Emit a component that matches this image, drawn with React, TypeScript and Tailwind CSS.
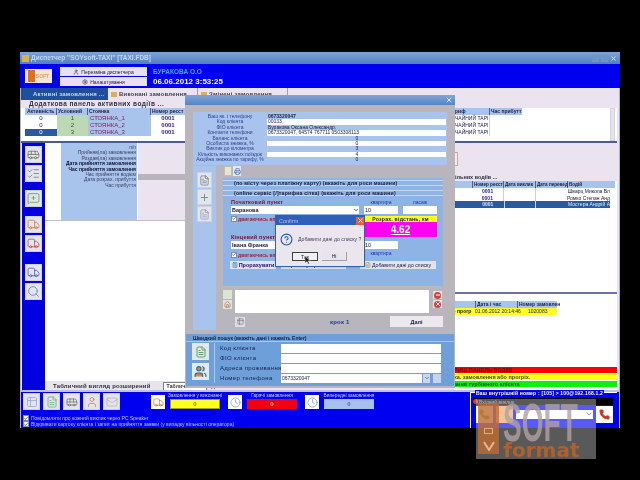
import React from "react";
import { Bus, Truck, Clock, Users, HelpCircle, Phone, Calculator, FileText, ListChecks, MessageSquarePlus, Plus, Search, ChevronDown, X, Check, Home, Minus, Settings, Printer, User, Table2, Mail } from "lucide-react";

function IconBtn({ children, w = "w-[17px]", h = "h-[17px]" }: { children: React.ReactNode; w?: string; h?: string }) {
  return <div className={`${w} ${h} bg-[#e4e4f0] border border-[#d0d0e0] flex items-center justify-center shrink-0`}>{children}</div>;
}
function Check2() {
  return <span className="w-[6px] h-[6px] bg-white border border-[#8888a0] flex items-center justify-center shrink-0"><Check size={5} strokeWidth={4} className="text-[#202040]" /></span>;
}
const leftRows = [["0", "1", "СТОЯНКА_1"], ["0", "2", "СТОЯНКА_2"], ["0", "3", "СТОЯНКА_3"]];
const midLabels = ["п/п", "Прийняв(ла) замовлення", "Роздав(ла) замовлення", "Дата прийняття замовлення", "Час прийняття замовлення", "Час прийняття водієм", "Дата розрах. прибуття", "Час прибуття"];
const infoRows: [string, string, boolean, string][] = [
  ["Ваш як. і телефону", "0673320047", false, "font-bold"],
  ["Код клієнта", "00033", true, "text-[#302080]"],
  ["ФІО клієнта", "Буракова Оксана Олександр.", false, ""],
  ["Контакти телефони", "0673320047, 64574   767711  0503308113", true, ""],
  ["Баланс клієнта", "0", false, "text-center"],
  ["Особиста знижка, %", "0", true, "text-center"],
  ["Виклик до кілометра", "3", false, "text-center"],
  ["Кількість виконаних поїздок", "4", true, "text-center"],
  ["Акційна знижка по тарифу, %", "0", false, "text-center"],
];

export default function App() {
  return (
    <div className="relative w-[640px] h-[480px] bg-black overflow-hidden font-['Liberation_Sans',sans-serif] text-[6px] leading-[6px] text-[#202040] blur-[0.4px]">
      {/* Main window */}
      <div className="absolute left-[20px] top-[52px] w-[600px] h-[376px] flex flex-col">
        <div className="h-[12px] bg-gradient-to-b from-[#7fa4d6] to-[#4f80c4] flex items-center px-[2px] gap-[2px] shrink-0">
          <span className="w-[7px] h-[7px] bg-[#e0b040] shrink-0" />
          <span className="text-[#c4d4ec] text-[6.5px] font-bold">Диспетчер "SOYsoft-TAXI" [TAXI.FDB]</span>
          <div className="ml-auto flex gap-[2px] pr-[1px]">
            <span className="w-[7px] h-[7px] bg-[#6f94c8]" />
            <span className="w-[7px] h-[7px] bg-[#6f94c8]" />
            <X size={7} strokeWidth={3} className="text-[#d8e8f8]" />
          </div>
        </div>
        <div className="h-[24px] bg-[#0000f0] flex shrink-0">
          <div className="ml-[5px] mt-[5px] w-[27px] h-[14px] bg-[#f2e4d8] flex items-center justify-center gap-[1px]">
            <span className="w-[7px] h-[12px] bg-[#e07020]" />
            <span className="text-[#e8a060] text-[5px] font-bold">SOFT</span>
          </div>
          <div className="ml-[8px] mt-[3px] flex flex-col gap-[1px] w-[87px]">
            <div className="h-[9px] bg-[#e8e0f0] flex items-center justify-center text-[5px] gap-[2px]"><User size={6} /> Перезміна диспетчера</div>
            <div className="h-[9px] bg-[#e8e0f0] flex items-center justify-center text-[5px] gap-[2px]"><Settings size={6} /> Налаштування</div>
          </div>
          <div className="ml-[6px] mt-[3px] flex flex-col">
            <span className="text-[#40b0f0] text-[6.5px] leading-[9px] font-bold">БУРАКОВА О.О</span>
            <span className="text-white text-[8px] leading-[12px] font-bold">06.06.2012 3:53:25</span>
          </div>
        </div>

        <div className="flex-1 min-h-0 bg-[#ebe4f0] flex flex-col border-x border-[#b0b0c8]">
          {/* tabs */}
          <div className="h-[12px] flex items-stretch shrink-0 text-[6px] font-bold tracking-[0.2px]">
            <div className="w-[87px] bg-[#1f4f9c] text-[#c8d8f0] flex items-center pl-[12px]">Активні замовлення ...</div>
            <div className="w-[90px] flex items-center pl-[3px] gap-[2px] border-r border-[#a0a0b0] text-[#404050]"><span className="w-[6px] h-[5px] bg-[#d8b060]" />Виконані замовлення ...</div>
            <div className="w-[90px] flex items-center pl-[3px] gap-[2px] border-r border-[#a0a0b0] text-[#404050]"><span className="w-[6px] h-[5px] bg-[#d8b060]" />Змінені замовлення</div>
          </div>
          {/* top panel */}
          <div className="h-[43px] mr-[2px] bg-white border-b-2 border-[#4a5a9c] flex flex-col shrink-0">
            <div className="h-[8px] bg-[#ebe4f0] text-[6.5px] font-bold tracking-[0.45px] pl-[8px] pt-[1px] text-[#303040]">Додаткова панель активних водіїв ...</div>
            <div className="flex pl-[4px]">
              <div className="w-[160px]">
                <div className="grid grid-cols-[32px_31px_63px_34px] h-[7px] bg-[#a8c4ec] font-bold text-[5px] leading-[7px]">
                  <span className="pl-[2px] border-r border-[#506090]">Активність</span>
                  <span className="pl-[1px] border-r border-[#506090]">Условний</span>
                  <span className="pl-[1px] border-r border-[#506090]">Стоянка</span>
                  <span className="pl-[1px] whitespace-nowrap">Номер реєст</span>
                </div>
                {leftRows.map((r, i) => (
                  <div key={i} className="grid grid-cols-[32px_31px_63px_34px] h-[7px] leading-[7px] text-[6px]">
                    <span className={`text-center ${i === 2 ? "bg-[#2a5a9c] text-white" : "bg-white"}`}>{r[0]}</span>
                    <span className="text-center bg-[#bcd8b4] text-[#206020]">{r[1]}</span>
                    <span className="pl-[2px] bg-[#a8c4ec] text-[#802050]">{r[2]}</span>
                    <span className="text-center bg-white text-[#302090] font-bold">0001</span>
                  </div>
                ))}
              </div>
              <div className="ml-auto w-[162px] flex">
                <div className="w-[67px]">
                  <div className="flex h-[7px] bg-[#a8c4ec] font-bold text-[5px] leading-[7px]">
                    <span className="w-[35px] pr-[27px] border-r border-[#506090] text-right shrink-0">риф</span>
                    <span className="pl-[1px] whitespace-nowrap">Час прибутт</span>
                  </div>
                  {[0, 1, 2].map((i) => (
                    <div key={i} className="h-[7px] leading-[7px] w-[35px] text-[5px] pr-[1px] border-r border-[#d0d0d8] whitespace-nowrap text-right">ЧАЙНИЙ ТАРІ</div>
                  ))}
                </div>
                <div className="ml-auto mr-[2px] w-[5px] h-[33px] bg-[#e4e4ec] border border-[#d0d0d8]" />
              </div>
            </div>
          </div>
          {/* lower area */}
          <div className="flex-1 min-h-0 flex">
            <div className="w-[23px] bg-[#0000e0] flex flex-col items-center pt-[3px] shrink-0 gap-[2px] ml-[1px]">
              <IconBtn><Bus size={13} strokeWidth={1.5} className="text-[#707058]" /></IconBtn>
              <IconBtn><ListChecks size={13} strokeWidth={1.5} className="text-[#708068]" /></IconBtn>
              <div className="h-[4px]" />
              <IconBtn><MessageSquarePlus size={13} strokeWidth={1.5} className="text-[#60a040]" /></IconBtn>
              <div className="h-[5px]" />
              <IconBtn><Truck size={13} strokeWidth={1.5} className="text-[#d08030]" /></IconBtn>
              <IconBtn><Truck size={13} strokeWidth={1.5} className="text-[#c05040]" /></IconBtn>
              <div className="h-[8px]" />
              <IconBtn><Truck size={13} strokeWidth={1.5} className="text-[#5060c0]" /></IconBtn>
              <IconBtn><Search size={13} strokeWidth={1.5} className="text-[#6080a0]" /></IconBtn>
            </div>
            <div className="w-[140px] shrink-0 flex flex-col bg-white">
              <div className="h-[78px] flex border-b border-[#c0c0c8] shrink-0">
                <div className="w-[16px] bg-white" />
                <div className="w-[76px] bg-[#a8c4ec] pt-[2px] pr-[1px] text-right text-[5px] leading-[5.4px]">
                  {midLabels.map((l, i) => <div key={i} className={i === 3 || i === 4 ? "font-bold whitespace-nowrap text-[#101030]" : "whitespace-nowrap text-[#404060]"}>{l}</div>)}
                </div>
                <div className="flex-1 bg-[#ebe4f0] pt-[31px] ml-[1px]"><div className="h-[6px] bg-[#b8b4bc]" /></div>
              </div>
              <div className="flex-1" />
              <div className="h-[9px] bg-[#e8e4ec] flex items-end text-[6px] font-bold tracking-[0.15px] shrink-0 text-[#303040]">
                <span className="ml-[8px] mb-[1px] whitespace-nowrap">Табличний вигляд розширений</span>
                <span className="ml-[12px] pl-[3px] bg-white border border-[#808090] border-b-0 h-[8px] w-[44px] whitespace-nowrap text-[5px] leading-[7px]">Табличний вигляд</span>
              </div>
            </div>
            <div className="flex-1 min-w-0" />
            <div className="w-[163px] shrink-0 flex flex-col mr-[2px]">
              <div className="h-[31px] flex items-center shrink-0">
                <span className="ml-[-4px] w-[8px] h-[14px] bg-[#f4ecf0] border border-[#d8a0a0] flex items-center text-[#c02020] text-[7px] font-bold justify-center">)</span>
              </div>
              <div className="h-[7px] text-[5.5px] font-bold pl-[1px] shrink-0 whitespace-nowrap text-[#303040]">ільних водіїв ...</div>
              <div className="h-[113px] bg-white border-b-2 border-[#7070b0] shrink-0">
                <div className="flex h-[7px] bg-[#a8c4ec] text-[4.6px] leading-[7px] font-bold mr-[2px]">
                  <span className="w-[18px]" />
                  <span className="w-[32px] border-x border-[#506090] pl-[1px] whitespace-nowrap">Номер реєст</span>
                  <span className="w-[32px] border-r border-[#506090] pl-[1px] whitespace-nowrap">Дата виклик</span>
                  <span className="w-[32px] border-r border-[#506090] pl-[1px] whitespace-nowrap">Дата перевед</span>
                  <span className="pl-[1px]">Водій</span>
                </div>
                {["Шварц Микола Вл", "Ромко Степан Анд", "Мостера Андрій А"].map((n, i) => (
                  <div key={i} className={`flex h-[6.6px] leading-[6.6px] text-[5px] mr-[7px] ${i === 2 ? "bg-[#2a5a9c] text-[#dce8f8]" : ""}`}>
                    <span className="w-[18px]" />
                    <span className={`w-[32px] text-center font-bold ${i === 2 ? "" : "text-[#302090]"}`}>0001</span>
                    <span className="w-[32px] border-l border-[#d0d0d8]" />
                    <span className="w-[32px] border-l border-[#d0d0d8]" />
                    <span className="pl-[1px] whitespace-nowrap flex-1">{n}</span>
                  </div>
                ))}
              </div>
              <div className="flex-1 bg-white flex flex-col pt-[7px]">
                <div className="flex h-[7px] bg-[#a8c4ec] w-[103px] text-[5px] leading-[7px] font-bold">
                  <span className="w-[21px]" />
                  <span className="w-[42px] border-l border-[#506090] pl-[1px]">Дата і час</span>
                  <span className="w-[40px] border-l border-[#506090] pl-[1px] whitespace-nowrap">Номер замовлен</span>
                </div>
                <div className="flex h-[7px] leading-[7px] bg-[#ffff20] w-[103px] text-[5px] whitespace-nowrap">
                  <span className="w-[21px] font-bold">- прогр</span>
                  <span className="w-[42px]">01.06.2012 20:14:46</span>
                  <span className="pl-[11px]">1020083</span>
                </div>
                <div className="flex-1" />
                <div className="h-[6px] leading-[6px] bg-[#ff0000] text-[5.5px] font-bold text-[#601010]">РИШ ПАНЕЛЬ ВОДІЇВ</div>
                <div className="h-[1px]" />
                <div className="h-[6px] leading-[6px] bg-[#ffff10] text-[5.5px] font-bold text-[#405010]">ка. замовлення або прогріх.</div>
                <div className="h-[1px]" />
                <div className="h-[6px] leading-[6px] bg-[#10f010] text-[5.5px] font-bold text-[#105010]">ання турбівного клієнта</div>
                <div className="h-[3px]" />
              </div>
            </div>
          </div>
          {/* bottom blue bar */}
          <div className="h-[38px] bg-[#0000f0] border-t-2 border-[#c0c0e0] flex shrink-0">
            <div className="w-[440px] pl-[2px] pt-[1px] flex flex-col">
              <div className="flex items-start">
                <div className="flex gap-[3px]">
                  <IconBtn><Table2 size={12} strokeWidth={1.5} className="text-[#90a8d0]" /></IconBtn>
                  <IconBtn><FileText size={12} strokeWidth={1.5} className="text-[#60a870]" /></IconBtn>
                  <IconBtn><Bus size={12} strokeWidth={1.5} className="text-[#707058]" /></IconBtn>
                  <IconBtn><User size={12} strokeWidth={1.5} className="text-[#c08040]" /></IconBtn>
                  <IconBtn><Mail size={12} strokeWidth={1.5} className="text-[#b0b0b0]" /></IconBtn>
                </div>
                <div className="ml-[31px] mt-[2px] w-[14px] h-[14px] bg-white flex items-center justify-center"><Truck size={11} strokeWidth={1.5} className="text-[#c08030]" /></div>
                <div className="ml-[5px] w-[50px] flex flex-col items-center">
                  <span className="text-[#c8d4ff] text-[4.8px] leading-[6px] whitespace-nowrap">Замовлення у виконанні</span>
                  <span className="w-[50px] h-[10px] bg-[#ffff20] border border-[#a0a020] text-center text-[#a08010] text-[6px] leading-[9px] font-bold">0</span>
                </div>
                <div className="ml-[8px] mt-[2px] w-[14px] h-[14px] bg-white flex items-center justify-center"><Clock size={11} strokeWidth={1.5} className="text-[#8090b0]" /></div>
                <div className="ml-[5px] w-[50px] flex flex-col items-center">
                  <span className="text-[#c8d4ff] text-[4.8px] leading-[6px] whitespace-nowrap">Гарячі замовлення</span>
                  <span className="w-[50px] h-[10px] bg-[#f00010] text-center text-[#f0c0c0] text-[6px] leading-[10px] font-bold">0</span>
                </div>
                <div className="ml-[8px] mt-[2px] w-[14px] h-[14px] bg-white flex items-center justify-center"><Clock size={11} strokeWidth={1.5} className="text-[#6090c0]" /></div>
                <div className="ml-[5px] w-[50px] flex flex-col items-center">
                  <span className="text-[#c8d4ff] text-[4.8px] leading-[6px] whitespace-nowrap">Випередні замовлення</span>
                  <span className="w-[50px] h-[10px] bg-[#a8c0f0] text-center text-[#5070a0] text-[6px] leading-[10px] font-bold">0</span>
                </div>
              </div>
              <div className="mt-[5px] flex items-center gap-[2px] text-[#b8c8ff] text-[5px] leading-[6px] whitespace-nowrap"><Check2 /> Повідомляти про кожний виклик через PC Speaker</div>
              <div className="flex items-center gap-[2px] text-[#b8c8ff] text-[5px] leading-[6px] whitespace-nowrap"><Check2 /> Відкривати картоку клієнта і запит на прийняття заявки (у випадку вільності оператора)</div>
            </div>
            <div className="ml-[9px] w-[147px] h-[36px] border-l border-t border-white relative flex flex-col">
              <span className="absolute -top-[3px] left-[4px] bg-[#0000f0] px-[1px] text-white text-[5px] leading-[6px] font-bold whitespace-nowrap tracking-[0.2px]">Ваш внутрішній номер : [105] &gt; 100@192.168.1.2</span>
              <div className="mt-[5px] ml-[2px] h-[7px] w-[140px] bg-black flex items-center gap-[1px] text-[5px] text-[#8090c0]"><span className="w-[5px] h-[5px] rounded-full bg-[#e03030]" /> Вхідний виклик</div>
              <div className="ml-[5px] mt-[1px] flex items-start">
                <div className="w-[17px] h-[17px] bg-white flex items-center justify-center"><Phone size={11} className="text-[#508020]" fill="#508020" /></div>
                <div className="ml-[3px] w-[17px] h-[17px] bg-[#f0a060]" />
                <div className="ml-[3px] mt-[4px] w-[77px] h-[9px] bg-white flex justify-end"><ChevronDown size={8} /></div>
                <div className="ml-[3px] w-[17px] h-[17px] bg-white flex items-center justify-center"><Phone size={11} className="text-[#d03020]" fill="#d03020" /></div>
              </div>
            </div>
          </div>
        </div>
      </div>

      {/* Order dialog */}
      <div className="absolute left-[185px] top-[95px] w-[270px] h-[293px] bg-[#b8b5bd] flex flex-col">
        <div className="h-[10px] bg-gradient-to-b from-[#7fa4d6] to-[#5585c6] flex justify-end items-center pr-[2px] shrink-0"><X size={8} strokeWidth={3} className="text-[#d8e8f8]" /></div>
        <div className="mt-[7px] ml-[8px] w-[254px] h-[53px] bg-[#a8c4ec] shrink-0 py-[2px] text-[5px] leading-[5.3px]">
          {infoRows.map((r, i) => (
            <div key={i} className="flex h-[5.4px]">
              <span className="w-[74px] text-center text-[#304090] whitespace-nowrap">{r[0]}</span>
              <span className={`flex-1 pl-[1px] mr-[1px] whitespace-nowrap ${r[2] ? "bg-white" : ""} ${r[3]}`}>{r[1]}</span>
            </div>
          ))}
        </div>
        <div className="flex ml-[8px] mt-[1px] h-[164px] shrink-0">
          <div className="w-[23px] bg-[#a8c4ec] flex flex-col items-center pt-[6px] gap-[1px] shrink-0">
            <IconBtn h="h-[16px]" w="w-[15px]"><FileText size={11} strokeWidth={1.5} className="text-[#607070]" /></IconBtn>
            <IconBtn h="h-[16px]" w="w-[15px]"><Plus size={11} className="text-[#60a040]" /></IconBtn>
            <IconBtn h="h-[16px]" w="w-[15px]"><FileText size={11} strokeWidth={1.5} className="text-[#8090a0]" /></IconBtn>
          </div>
          <div className="ml-[7px] w-[220px] flex flex-col">
            <div className="flex gap-[1px] pl-[1px] h-[12px] shrink-0">
              <span className="w-[8px] h-[10px] bg-[#e8e4d0] border border-[#c0c0b0]" />
              <span className="w-[8px] h-[10px] bg-[#e0e8f4] flex items-center justify-center"><Printer size={7} className="text-[#3060b0]" /></span>
            </div>
            <div className="h-[108px] bg-[#8eb4e6] flex flex-col shrink-0 text-[5.5px]">
              <div className="mt-[2px] h-[6px] border-y border-[#c0d8f4] font-bold pl-[11px] whitespace-nowrap tracking-[0.2px] text-[5.2px] leading-[5px]">(по місту через платіжну карту)  (вкажіть для роси машини)</div>
              <div className="mt-[4px] h-[6px] border-y border-[#c0d8f4] font-bold pl-[11px] whitespace-nowrap tracking-[0.2px] text-[5.2px] leading-[5px]">(online сервіс [/]тарифна сітка)      (вкажіть для роси машини)</div>
              <div className="flex pl-[8px] mt-[3px]">
                <div className="w-[128px] shrink-0">
                  <div className="h-[7px] text-[#801030] font-bold text-[5.5px] tracking-[0.2px]">Початковий пункт</div>
                  <div className="h-[8px] bg-white flex items-center justify-between pl-[1px] font-bold text-[5.5px]">Баранова<ChevronDown size={6} strokeWidth={3} /></div>
                  <div className="mt-[1px] h-[7px] flex items-center gap-[1px] text-[#a02040] font-bold text-[5px] whitespace-nowrap"><Check2 /> двигаючись вперед</div>
                  <div className="mt-[12px] h-[7px] text-[#801030] font-bold text-[5.5px] tracking-[0.2px]">Кінцевий пункт</div>
                  <div className="h-[8px] bg-white pl-[1px] font-bold text-[5.5px] leading-[8px]">Івана Франка</div>
                  <div className="mt-[2px] h-[7px] flex items-center gap-[1px] text-[#a02040] font-bold text-[5px] whitespace-nowrap"><Check2 /> двигаючись вперед</div>
                </div>
                <div className="ml-[5px] w-[73px] flex flex-col">
                  <div className="flex gap-[5px] h-[7px] text-[#2030c0] text-[5px] text-center"><span className="w-[34px]">квартира</span><span className="w-[34px]">пасаж</span></div>
                  <div className="flex gap-[5px] h-[8px]"><span className="w-[34px] bg-white pl-[1px] leading-[8px]">10</span><span className="w-[34px] bg-white" /></div>
                  <div className="mt-[2px] h-[6px] bg-[#ffff20] text-center font-bold text-[5.2px] leading-[6px] tracking-[0.2px]">Розрах. відстань, км</div>
                  <div className="h-[15px] bg-[#ff00f0] text-center text-white font-bold underline text-[10px] leading-[15px]">4.62</div>
                  <div className="mt-[4px] flex h-[8px]"><span className="w-[34px] bg-white pl-[1px] leading-[8px]">10</span></div>
                  <div className="w-[34px] mt-[1px] text-[#2030c0] text-[5px] text-center">квартира</div>
                </div>
              </div>
              <div className="flex mt-[3px] pl-[7px] h-[8px]">
                <div className="w-[46px] bg-[#dfe4f0] flex items-center justify-center gap-[1px] font-bold text-[#201070] text-[5.5px] whitespace-nowrap"><Calculator size={6} className="text-[#3060b0]" />Прорахувати</div>
                <div className="ml-[5px] w-[65px] bg-[#dfe4f0] flex items-center justify-center font-bold text-[5.2px] whitespace-nowrap">Ціна тарифної сітки</div>
                <div className="ml-[14px] w-[76px] bg-[#dfe4f0] flex items-center justify-center gap-[1px] text-[5.2px] whitespace-nowrap"><FileText size={6} className="text-[#a09040]" />Добавити дані до списку</div>
              </div>
            </div>
            <div className="flex mt-[4px] h-[23px] shrink-0">
              <div className="w-[9px] flex flex-col gap-[1px] shrink-0">
                <span className="h-[9px] bg-[#dce4d4]" />
                <span className="h-[9px] bg-[#e8e0d8] flex items-center justify-center"><Home size={7} className="text-[#a07040]" /></span>
              </div>
              <div className="ml-[3px] w-[194px] bg-white shrink-0" />
              <div className="ml-[4px] w-[9px] flex flex-col gap-[1px] pt-[1px]">
                <span className="h-[8px] bg-[#e8e0e0] flex items-center justify-center"><span className="w-[7px] h-[7px] rounded-full bg-[#d04040] flex items-center justify-center"><Minus size={6} strokeWidth={4} className="text-white" /></span></span>
                <span className="h-[8px] bg-[#e8e0e0] flex items-center justify-center"><span className="w-[7px] h-[7px] rounded-full bg-[#d04040] flex items-center justify-center"><X size={6} strokeWidth={4} className="text-white" /></span></span>
              </div>
            </div>
            <div className="flex items-center mt-[3px] h-[11px] shrink-0">
              <span className="ml-[12px] w-[10px] h-[10px] bg-[#dcdce4] flex items-center justify-center"><Table2 size={7} className="text-[#707080]" /></span>
              <span className="ml-[85px] w-[22px] text-[#2030b0] font-bold text-[6px] whitespace-nowrap tracking-[0.2px]">крок 1</span>
              <span className="ml-[38px] w-[53px] h-[11px] bg-[#ece8ee] flex items-center justify-center font-bold text-[5.5px]">Далі</span>
            </div>
          </div>
        </div>
        {/* quick search */}
        <div className="mt-[4px] mx-[1px] h-[52px] bg-[#6f9fd8] flex flex-col shrink-0">
          <div className="h-[8px] font-bold text-[5px] leading-[7px] pl-[7px] pt-[1px] border-b border-[#a8c8ec] whitespace-nowrap">Швидкий пошук  (вкажіть дані і нажміть Enter)</div>
          <div className="flex flex-1 pt-[1px]">
            <div className="w-[29px] pl-[6px] border-r border-[#a8c8ec] flex flex-col gap-[3px] mb-[3px] shrink-0">
              <div className="w-[17px] h-[17px] bg-[#e4e8e4] flex items-center justify-center"><FileText size={12} className="text-[#60a070]" /></div>
              <div className="w-[17px] h-[17px] bg-[#e4e8ec] flex items-center justify-center"><Users size={13} className="text-[#2070a0]" fill="#e08040" /></div>
            </div>
            <div className="flex flex-col">
              {["Код клієнта", "ФІО клієнта", "Адреса проживання", "Номер телефона"].map((l, i) => (
                <div key={i} className="flex h-[10px] items-center">
                  <span className="w-[66px] pl-[5px] text-[6px] tracking-[0.35px] text-[#102050] whitespace-nowrap">{l}</span>
                  {i < 3 ? <span className="w-[160px] h-[9px] bg-white" /> : (
                    <span className="w-[160px] flex items-center gap-[1px]">
                      <span className="w-[142px] h-[9px] bg-white text-[5px] leading-[9px] pl-[1px]">0673320047</span>
                      <span className="w-[7px] h-[9px] bg-[#c8d8f0] flex items-center justify-center"><ChevronDown size={6} /></span>
                      <span className="ml-[2px] w-[8px] h-[9px] bg-[#c8d4ec]" />
                    </span>
                  )}
                </div>
              ))}
            </div>
          </div>
        </div>
      </div>

      {/* Confirm */}
      <div className="absolute left-[275px] top-[215px] w-[90px] h-[52px] bg-[#ebe6ee] border border-[#3060b0] flex flex-col shadow">
        <div className="h-[9px] bg-[#2f5fb8] flex items-center justify-between pl-[3px] text-[#b0c8ec] text-[5.5px] shrink-0">
          Confirm
          <span className="w-[8px] h-[8px] bg-[#e06040] flex items-center justify-center"><X size={7} strokeWidth={3} className="text-white" /></span>
        </div>
        <div className="flex items-center pl-[4px] h-[22px] mt-[3px] shrink-0">
          <HelpCircle size={13} className="text-[#2050b0]" />
          <span className="ml-[5px] text-[5.2px] whitespace-nowrap text-[#404060]">Добавити дані до списку ?</span>
        </div>
        <div className="flex pl-[16px] gap-[4px] mt-[2px]">
          <span className="w-[26px] h-[9px] bg-[#f0f0f0] border border-[#404040] flex items-center justify-center text-[5px]">Так</span>
          <span className="w-[25px] h-[9px] bg-[#e8e4ec] border-b border-r border-[#a0a0a8] flex items-center justify-center text-[5px]">Ні</span>
        </div>
        <svg className="absolute left-[29px] top-[40px]" width="6" height="9" viewBox="0 0 6 9"><path d="M0 0v7l2-1.5L3.2 8l1.2-.5L3.2 5H5.5z" fill="#202020" stroke="#fff" strokeWidth="0.4" /></svg>
      </div>

      {/* Watermark */}
      <div className="absolute left-[476px] top-[399px] w-[120px] h-[60px] bg-white/35 flex pointer-events-none">
        <div className="ml-[2px] mt-[4px] w-[33px] h-[51px] bg-[#c06a30]/80 flex flex-col items-center justify-end">
          <span className="w-[9px] h-[6px] border border-[#d8b090] mb-[7px]" />
          <svg width="12" height="10" viewBox="0 0 12 10" className="mb-[3px]"><path d="M1 1l5 8 5-8" fill="none" stroke="#e0b898" strokeWidth="2" /></svg>
        </div>
        <div className="ml-[4px] flex flex-col overflow-hidden">
          <span className="text-[#b0a0a0]/80 font-bold text-[54px] leading-[42px] origin-left scale-x-[0.52] whitespace-nowrap w-[144px] mt-[2px]">SOFT</span>
          <span className="text-[#b0602c] font-['DejaVu_Sans',sans-serif] font-bold text-[20px] leading-[14px] whitespace-nowrap">format</span>
        </div>
      </div>
    </div>
  );
}
